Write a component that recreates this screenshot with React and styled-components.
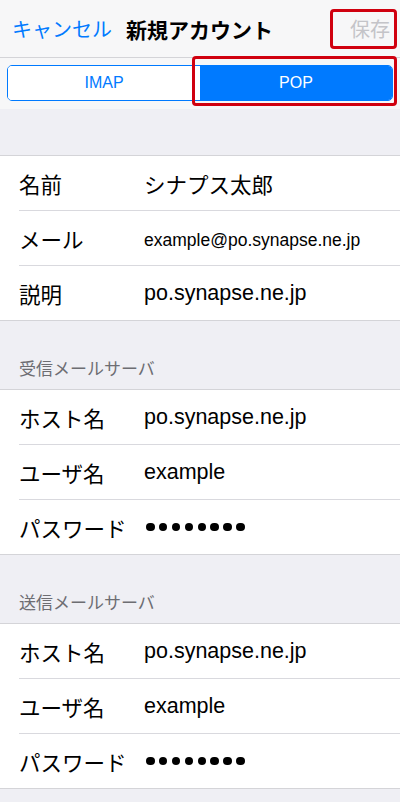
import React from "react"
import styled, { createGlobalStyle } from "styled-components"

const GlobalStyle = createGlobalStyle`
  html, body {
    margin: 0;
    padding: 0;
    background: #efeff4;
  }
  body {
    font-family: "Liberation Sans", "Noto Sans CJK JP", sans-serif;
    -webkit-font-smoothing: antialiased;
  }
`

const Screen = styled.div`
  position: relative;
  width: 400px;
  min-height: 802px;
  background: #efeff4;
`

const NavBar = styled.header`
  display: flex;
  align-items: center;
  height: 57px;
  padding: 0 10px 0 12px;
  background: #f7f7f8;
  border-bottom: 1px solid #d4d4d8;
  font-family: "Noto Sans CJK JP", sans-serif;
`

const NavButton = styled.span`
  font-size: 20px;
  color: ${props => props.color};
  white-space: nowrap;
`

const NavTitle = styled.span`
  margin-left: 14px;
  font-size: 21px;
  font-weight: 700;
  color: #000;
  flex: 1;
`

const Toolbar = styled.div`
  background: #f7f7f8;
  padding: 7px 7px 8px;
`

const Segmented = styled.div`
  display: flex;
  height: 36px;
  border: 1px solid #007aff;
  border-radius: 5px;
  overflow: hidden;
  box-sizing: border-box;
`

const Segment = styled.div`
  flex: 1;
  display: flex;
  align-items: center;
  justify-content: center;
  font-size: 16px;
  color: ${props => (props.active ? "#fff" : "#007aff")};
  background: ${props => (props.active ? "#007aff" : "#fff")};
`

const Spacer = styled.div`
  height: 46px;
`

const SectionHeader = styled.div`
  display: flex;
  align-items: flex-end;
  height: ${props => props.height}px;
  padding: 0 19px 9px;
  box-sizing: border-box;
  font-family: "Noto Sans CJK JP", sans-serif;
  font-size: 17px;
  color: #6d6d72;
`

const Group = styled.div`
  background: #fff;
  border-top: 1px solid #d4d4d8;
  border-bottom: 1px solid #d4d4d8;
`

const Row = styled.div`
  display: flex;
  align-items: center;
  height: 54px;
  margin-left: 19px;
  border-top: ${props => (props.first ? "none" : "1px solid #d9d9de")};
`

const Label = styled.span`
  width: 125px;
  flex-shrink: 0;
  font-family: "Noto Sans CJK JP", sans-serif;
  font-size: 21.5px;
  color: #000;
`

const Value = styled.span`
  font-family: "Liberation Sans", "Noto Sans CJK JP", sans-serif;
  font-size: ${props => props.size || 21.5}px;
  color: #000;
  padding-top: ${props => props.shift || 0}px;
`

const Dots = styled.span`
  display: flex;
  gap: 4.4px;
  margin-left: 2px;
`

const Dot = styled.span`
  width: 8.5px;
  height: 8.5px;
  border-radius: 50%;
  background: #000;
`

const Highlight = styled.div`
  position: absolute;
  border: 3px solid #d0000f;
  border-radius: 4px;
  box-sizing: border-box;
  pointer-events: none;
`

const Password = () => (
  <Dots>
    {Array.from({ length: 8 }).map((_, i) => (
      <Dot key={i} />
    ))}
  </Dots>
)

const ServerGroup = ({ title, headerHeight }) => (
  <>
    <SectionHeader height={headerHeight}>{title}</SectionHeader>
    <Group>
      <Row first>
        <Label>ホスト名</Label>
        <Value>po.synapse.ne.jp</Value>
      </Row>
      <Row>
        <Label>ユーザ名</Label>
        <Value>example</Value>
      </Row>
      <Row>
        <Label>パスワード</Label>
        <Password />
      </Row>
    </Group>
  </>
)

export default function App() {
  return (
    <Screen>
      <GlobalStyle />
      <NavBar>
        <NavButton color="#007aff">キャンセル</NavButton>
        <NavTitle>新規アカウント</NavTitle>
        <NavButton color="#c4c4c8">保存</NavButton>
      </NavBar>
      <Toolbar>
        <Segmented>
          <Segment>IMAP</Segment>
          <Segment active>POP</Segment>
        </Segmented>
      </Toolbar>
      <Spacer />
      <Group>
        <Row first>
          <Label>名前</Label>
          <Value>シナプス太郎</Value>
        </Row>
        <Row>
          <Label>メール</Label>
          <Value size={17.5} shift={4}>example@po.synapse.ne.jp</Value>
        </Row>
        <Row>
          <Label>説明</Label>
          <Value>po.synapse.ne.jp</Value>
        </Row>
      </Group>
      <ServerGroup title="受信メールサーバ" headerHeight={68} />
      <ServerGroup title="送信メールサーバ" headerHeight={68} />
      <Highlight style={{ left: 330, top: 9, width: 67, height: 40 }} />
      <Highlight style={{ left: 192, top: 56, width: 205, height: 50 }} />
    </Screen>
  )
}
